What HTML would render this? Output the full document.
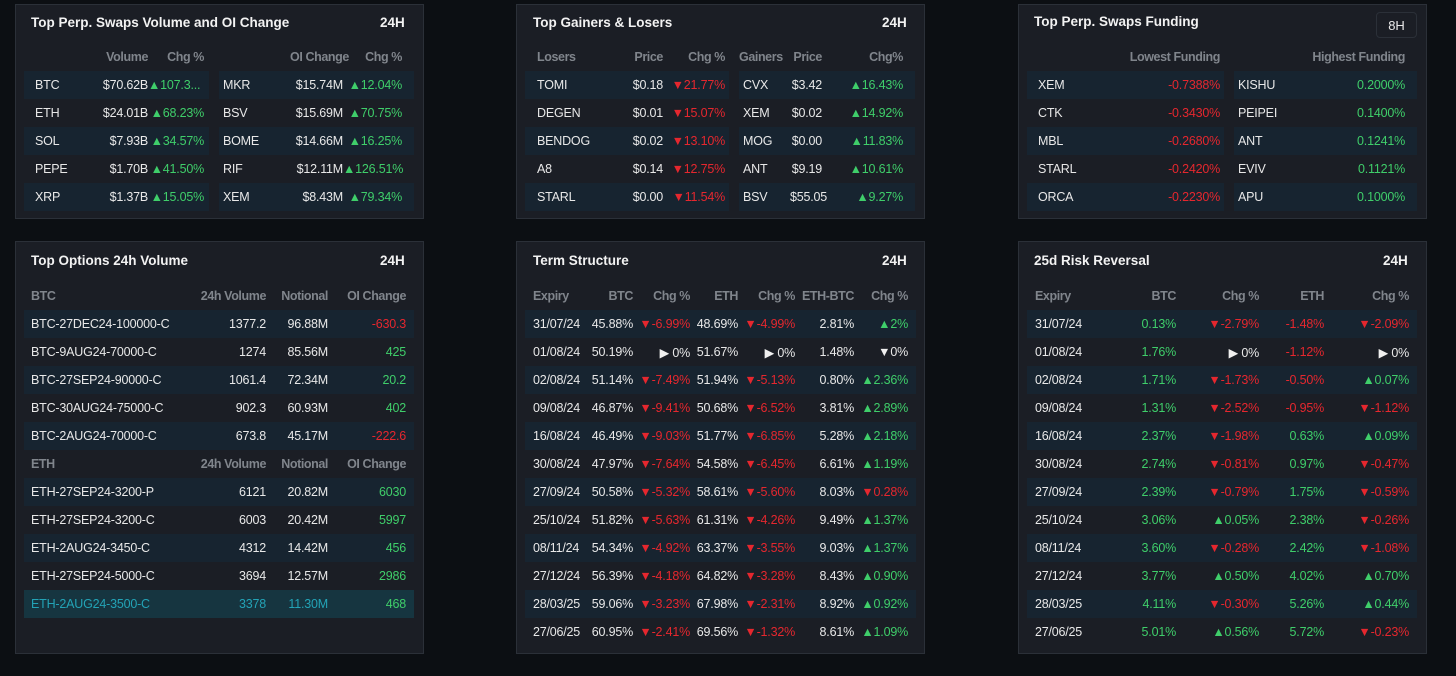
<!DOCTYPE html>
<html><head><meta charset="utf-8"><style>
*{margin:0;padding:0;box-sizing:border-box}
body{width:1456px;height:676px;background:#0c0f13;font-family:"Liberation Sans",Arial,sans-serif;color:#e8e8e8;position:relative;overflow:hidden;font-size:12.5px}
.p{position:absolute;background:#1b1e25;border:1px solid #2b3038}
.t{position:absolute;font-weight:bold;font-size:13.5px;color:#f2f2f2}
.h{position:absolute;font-weight:bold;font-size:13.5px;color:#f2f2f2}
table{position:absolute;border-collapse:collapse;table-layout:fixed}
td{height:28px;padding:0;white-space:nowrap;overflow:visible;text-align:right;letter-spacing:-0.2px}
td.l{text-align:left}
tr.hd td{color:#80858c;font-weight:bold;height:28px;letter-spacing:-0.4px}
tr.s td{background:#172430}
tr.x td{background:#163540;color:#23a3b6}
tr.x td.g{color:#3fce6a}
.g{color:#3fce6a}.r{color:#e5272e}.w{color:#f0f0f0}
.btn{position:absolute;border:1px solid #2b3038;border-radius:4px;width:41px;height:26px;font-size:13px;text-align:center;line-height:25px}
</style></head><body>

<div class="p" style="left:15px;top:4px;width:409px;height:215px"></div>
<div class="t" style="left:31px;top:15px">Top Perp. Swaps Volume and OI Change</div>
<div class="h" style="left:380px;top:15px">24H</div>
<table style="left:24px;top:43px;width:185px">
<colgroup><col style="width:76px"><col style="width:48px"><col style="width:56px"><col style="width:5px"></colgroup>
<tr class="hd"><td></td><td>Volume</td><td>Chg %</td><td></td></tr>
<tr class="s"><td class="l" style="padding-left:11px">BTC</td><td>$70.62B</td><td class="g" style="text-align:left">▲107.3...</td><td></td></tr>
<tr><td class="l" style="padding-left:11px">ETH</td><td>$24.01B</td><td class="g">▲68.23%</td><td></td></tr>
<tr class="s"><td class="l" style="padding-left:11px">SOL</td><td>$7.93B</td><td class="g">▲34.57%</td><td></td></tr>
<tr><td class="l" style="padding-left:11px">PEPE</td><td>$1.70B</td><td class="g">▲41.50%</td><td></td></tr>
<tr class="s"><td class="l" style="padding-left:11px">XRP</td><td>$1.37B</td><td class="g">▲15.05%</td><td></td></tr>
</table>
<table style="left:219px;top:43px;width:195px">
<colgroup><col style="width:71px"><col style="width:53px"><col style="width:59px"><col style="width:12px"></colgroup>
<tr class="hd"><td></td><td>OI Change</td><td>Chg %</td><td></td></tr>
<tr class="s"><td class="l" style="padding-left:4px">MKR</td><td>$15.74M</td><td class="g">▲12.04%</td><td></td></tr>
<tr><td class="l" style="padding-left:4px">BSV</td><td>$15.69M</td><td class="g">▲70.75%</td><td></td></tr>
<tr class="s"><td class="l" style="padding-left:4px">BOME</td><td>$14.66M</td><td class="g">▲16.25%</td><td></td></tr>
<tr><td class="l" style="padding-left:4px">RIF</td><td>$12.11M</td><td class="g">▲126.51%</td><td></td></tr>
<tr class="s"><td class="l" style="padding-left:4px">XEM</td><td>$8.43M</td><td class="g">▲79.34%</td><td></td></tr>
</table>

<div class="p" style="left:516px;top:4px;width:409px;height:215px"></div>
<div class="t" style="left:533px;top:15px">Top Gainers &amp; Losers</div>
<div class="h" style="left:882px;top:15px">24H</div>
<table style="left:525px;top:43px;width:204px">
<colgroup><col style="width:85px"><col style="width:53px"><col style="width:62px"><col style="width:4px"></colgroup>
<tr class="hd"><td class="l" style="padding-left:12px">Losers</td><td>Price</td><td>Chg %</td><td></td></tr>
<tr class="s"><td class="l" style="padding-left:12px">TOMI</td><td>$0.18</td><td class="r">▼21.77%</td><td></td></tr>
<tr><td class="l" style="padding-left:12px">DEGEN</td><td>$0.01</td><td class="r">▼15.07%</td><td></td></tr>
<tr class="s"><td class="l" style="padding-left:12px">BENDOG</td><td>$0.02</td><td class="r">▼13.10%</td><td></td></tr>
<tr><td class="l" style="padding-left:12px">A8</td><td>$0.14</td><td class="r">▼12.75%</td><td></td></tr>
<tr class="s"><td class="l" style="padding-left:12px">STARL</td><td>$0.00</td><td class="r">▼11.54%</td><td></td></tr>
</table>
<table style="left:739px;top:43px;width:176px">
<colgroup><col style="width:51px"><col style="width:32px"><col style="width:81px"><col style="width:12px"></colgroup>
<tr class="hd"><td class="l" style="padding-left:0">Gainers</td><td>Price</td><td>Chg%</td><td></td></tr>
<tr class="s"><td class="l" style="padding-left:4px">CVX</td><td>$3.42</td><td class="g">▲16.43%</td><td></td></tr>
<tr><td class="l" style="padding-left:4px">XEM</td><td>$0.02</td><td class="g">▲14.92%</td><td></td></tr>
<tr class="s"><td class="l" style="padding-left:4px">MOG</td><td>$0.00</td><td class="g">▲11.83%</td><td></td></tr>
<tr><td class="l" style="padding-left:4px">ANT</td><td>$9.19</td><td class="g">▲10.61%</td><td></td></tr>
<tr class="s"><td class="l" style="padding-left:4px">BSV</td><td>$55.05</td><td class="g">▲9.27%</td><td></td></tr>
</table>

<div class="p" style="left:1018px;top:4px;width:409px;height:215px"></div>
<div class="t" style="left:1034px;top:14px">Top Perp. Swaps Funding</div>
<div class="btn" style="left:1376px;top:12px">8H</div>
<table style="left:1027px;top:43px;width:197px">
<colgroup><col style="width:93px"><col style="width:100px"><col style="width:4px"></colgroup>
<tr class="hd"><td></td><td>Lowest Funding</td><td></td></tr>
<tr class="s"><td class="l" style="padding-left:11px">XEM</td><td class="r">-0.7388%</td><td></td></tr>
<tr><td class="l" style="padding-left:11px">CTK</td><td class="r">-0.3430%</td><td></td></tr>
<tr class="s"><td class="l" style="padding-left:11px">MBL</td><td class="r">-0.2680%</td><td></td></tr>
<tr><td class="l" style="padding-left:11px">STARL</td><td class="r">-0.2420%</td><td></td></tr>
<tr class="s"><td class="l" style="padding-left:11px">ORCA</td><td class="r">-0.2230%</td><td></td></tr>
</table>
<table style="left:1234px;top:43px;width:183px">
<colgroup><col style="width:71px"><col style="width:100px"><col style="width:12px"></colgroup>
<tr class="hd"><td></td><td>Highest Funding</td><td></td></tr>
<tr class="s"><td class="l" style="padding-left:4px">KISHU</td><td class="g">0.2000%</td><td></td></tr>
<tr><td class="l" style="padding-left:4px">PEIPEI</td><td class="g">0.1400%</td><td></td></tr>
<tr class="s"><td class="l" style="padding-left:4px">ANT</td><td class="g">0.1241%</td><td></td></tr>
<tr><td class="l" style="padding-left:4px">EVIV</td><td class="g">0.1121%</td><td></td></tr>
<tr class="s"><td class="l" style="padding-left:4px">APU</td><td class="g">0.1000%</td><td></td></tr>
</table>

<div class="p" style="left:15px;top:241px;width:409px;height:413px"></div>
<div class="t" style="left:31px;top:253px">Top Options 24h Volume</div>
<div class="h" style="left:380px;top:253px">24H</div>
<table style="left:24px;top:282px;width:390px">
<colgroup><col style="width:166px"><col style="width:76px"><col style="width:62px"><col style="width:78px"><col style="width:8px"></colgroup>
<tr class="hd"><td class="l" style="padding-left:7px">BTC</td><td>24h Volume</td><td>Notional</td><td>OI Change</td><td></td></tr>
<tr class="s"><td class="l" style="padding-left:7px">BTC-27DEC24-100000-C</td><td>1377.2</td><td>96.88M</td><td class="r">-630.3</td><td></td></tr>
<tr><td class="l" style="padding-left:7px">BTC-9AUG24-70000-C</td><td>1274</td><td>85.56M</td><td class="g">425</td><td></td></tr>
<tr class="s"><td class="l" style="padding-left:7px">BTC-27SEP24-90000-C</td><td>1061.4</td><td>72.34M</td><td class="g">20.2</td><td></td></tr>
<tr><td class="l" style="padding-left:7px">BTC-30AUG24-75000-C</td><td>902.3</td><td>60.93M</td><td class="g">402</td><td></td></tr>
<tr class="s"><td class="l" style="padding-left:7px">BTC-2AUG24-70000-C</td><td>673.8</td><td>45.17M</td><td class="r">-222.6</td><td></td></tr>
<tr class="hd"><td class="l" style="padding-left:7px">ETH</td><td>24h Volume</td><td>Notional</td><td>OI Change</td><td></td></tr>
<tr class="s"><td class="l" style="padding-left:7px">ETH-27SEP24-3200-P</td><td>6121</td><td>20.82M</td><td class="g">6030</td><td></td></tr>
<tr><td class="l" style="padding-left:7px">ETH-27SEP24-3200-C</td><td>6003</td><td>20.42M</td><td class="g">5997</td><td></td></tr>
<tr class="s"><td class="l" style="padding-left:7px">ETH-2AUG24-3450-C</td><td>4312</td><td>14.42M</td><td class="g">456</td><td></td></tr>
<tr><td class="l" style="padding-left:7px">ETH-27SEP24-5000-C</td><td>3694</td><td>12.57M</td><td class="g">2986</td><td></td></tr>
<tr class="x"><td class="l" style="padding-left:7px">ETH-2AUG24-3500-C</td><td>3378</td><td>11.30M</td><td class="g">468</td><td></td></tr>
</table>

<div class="p" style="left:516px;top:241px;width:409px;height:413px"></div>
<div class="t" style="left:533px;top:253px">Term Structure</div>
<div class="h" style="left:882px;top:253px">24H</div>
<table style="left:525px;top:282px;width:391px">
<colgroup><col style="width:55px"><col style="width:53px"><col style="width:57px"><col style="width:48px"><col style="width:57px"><col style="width:59px"><col style="width:54px"><col style="width:8px"></colgroup>
<tr class="hd"><td class="l" style="padding-left:8px">Expiry</td><td>BTC</td><td>Chg %</td><td>ETH</td><td>Chg %</td><td>ETH-BTC</td><td>Chg %</td><td></td></tr>
<tr class="s"><td class="l" style="padding-left:8px">31/07/24</td><td>45.88%</td><td class="r">▼-6.99%</td><td>48.69%</td><td class="r">▼-4.99%</td><td>2.81%</td><td class="g">▲2%</td><td></td></tr>
<tr><td class="l" style="padding-left:8px">01/08/24</td><td>50.19%</td><td><span class="w">▶</span> 0%</td><td>51.67%</td><td><span class="w">▶</span> 0%</td><td>1.48%</td><td><span class="w">▼</span>0%</td><td></td></tr>
<tr class="s"><td class="l" style="padding-left:8px">02/08/24</td><td>51.14%</td><td class="r">▼-7.49%</td><td>51.94%</td><td class="r">▼-5.13%</td><td>0.80%</td><td class="g">▲2.36%</td><td></td></tr>
<tr><td class="l" style="padding-left:8px">09/08/24</td><td>46.87%</td><td class="r">▼-9.41%</td><td>50.68%</td><td class="r">▼-6.52%</td><td>3.81%</td><td class="g">▲2.89%</td><td></td></tr>
<tr class="s"><td class="l" style="padding-left:8px">16/08/24</td><td>46.49%</td><td class="r">▼-9.03%</td><td>51.77%</td><td class="r">▼-6.85%</td><td>5.28%</td><td class="g">▲2.18%</td><td></td></tr>
<tr><td class="l" style="padding-left:8px">30/08/24</td><td>47.97%</td><td class="r">▼-7.64%</td><td>54.58%</td><td class="r">▼-6.45%</td><td>6.61%</td><td class="g">▲1.19%</td><td></td></tr>
<tr class="s"><td class="l" style="padding-left:8px">27/09/24</td><td>50.58%</td><td class="r">▼-5.32%</td><td>58.61%</td><td class="r">▼-5.60%</td><td>8.03%</td><td class="r">▼0.28%</td><td></td></tr>
<tr><td class="l" style="padding-left:8px">25/10/24</td><td>51.82%</td><td class="r">▼-5.63%</td><td>61.31%</td><td class="r">▼-4.26%</td><td>9.49%</td><td class="g">▲1.37%</td><td></td></tr>
<tr class="s"><td class="l" style="padding-left:8px">08/11/24</td><td>54.34%</td><td class="r">▼-4.92%</td><td>63.37%</td><td class="r">▼-3.55%</td><td>9.03%</td><td class="g">▲1.37%</td><td></td></tr>
<tr><td class="l" style="padding-left:8px">27/12/24</td><td>56.39%</td><td class="r">▼-4.18%</td><td>64.82%</td><td class="r">▼-3.28%</td><td>8.43%</td><td class="g">▲0.90%</td><td></td></tr>
<tr class="s"><td class="l" style="padding-left:8px">28/03/25</td><td>59.06%</td><td class="r">▼-3.23%</td><td>67.98%</td><td class="r">▼-2.31%</td><td>8.92%</td><td class="g">▲0.92%</td><td></td></tr>
<tr><td class="l" style="padding-left:8px">27/06/25</td><td>60.95%</td><td class="r">▼-2.41%</td><td>69.56%</td><td class="r">▼-1.32%</td><td>8.61%</td><td class="g">▲1.09%</td><td></td></tr>
</table>

<div class="p" style="left:1018px;top:241px;width:409px;height:413px"></div>
<div class="t" style="left:1034px;top:253px">25d Risk Reversal</div>
<div class="h" style="left:1383px;top:253px">24H</div>
<table style="left:1027px;top:282px;width:390px">
<colgroup><col style="width:73px"><col style="width:76px"><col style="width:83px"><col style="width:65px"><col style="width:85px"><col style="width:8px"></colgroup>
<tr class="hd"><td class="l" style="padding-left:8px">Expiry</td><td>BTC</td><td>Chg %</td><td>ETH</td><td>Chg %</td><td></td></tr>
<tr class="s"><td class="l" style="padding-left:8px">31/07/24</td><td class="g">0.13%</td><td class="r">▼-2.79%</td><td class="r">-1.48%</td><td class="r">▼-2.09%</td><td></td></tr>
<tr><td class="l" style="padding-left:8px">01/08/24</td><td class="g">1.76%</td><td><span class="w">▶</span> 0%</td><td class="r">-1.12%</td><td><span class="w">▶</span> 0%</td><td></td></tr>
<tr class="s"><td class="l" style="padding-left:8px">02/08/24</td><td class="g">1.71%</td><td class="r">▼-1.73%</td><td class="r">-0.50%</td><td class="g">▲0.07%</td><td></td></tr>
<tr><td class="l" style="padding-left:8px">09/08/24</td><td class="g">1.31%</td><td class="r">▼-2.52%</td><td class="r">-0.95%</td><td class="r">▼-1.12%</td><td></td></tr>
<tr class="s"><td class="l" style="padding-left:8px">16/08/24</td><td class="g">2.37%</td><td class="r">▼-1.98%</td><td class="g">0.63%</td><td class="g">▲0.09%</td><td></td></tr>
<tr><td class="l" style="padding-left:8px">30/08/24</td><td class="g">2.74%</td><td class="r">▼-0.81%</td><td class="g">0.97%</td><td class="r">▼-0.47%</td><td></td></tr>
<tr class="s"><td class="l" style="padding-left:8px">27/09/24</td><td class="g">2.39%</td><td class="r">▼-0.79%</td><td class="g">1.75%</td><td class="r">▼-0.59%</td><td></td></tr>
<tr><td class="l" style="padding-left:8px">25/10/24</td><td class="g">3.06%</td><td class="g">▲0.05%</td><td class="g">2.38%</td><td class="r">▼-0.26%</td><td></td></tr>
<tr class="s"><td class="l" style="padding-left:8px">08/11/24</td><td class="g">3.60%</td><td class="r">▼-0.28%</td><td class="g">2.42%</td><td class="r">▼-1.08%</td><td></td></tr>
<tr><td class="l" style="padding-left:8px">27/12/24</td><td class="g">3.77%</td><td class="g">▲0.50%</td><td class="g">4.02%</td><td class="g">▲0.70%</td><td></td></tr>
<tr class="s"><td class="l" style="padding-left:8px">28/03/25</td><td class="g">4.11%</td><td class="r">▼-0.30%</td><td class="g">5.26%</td><td class="g">▲0.44%</td><td></td></tr>
<tr><td class="l" style="padding-left:8px">27/06/25</td><td class="g">5.01%</td><td class="g">▲0.56%</td><td class="g">5.72%</td><td class="r">▼-0.23%</td><td></td></tr>
</table>
</body></html>
